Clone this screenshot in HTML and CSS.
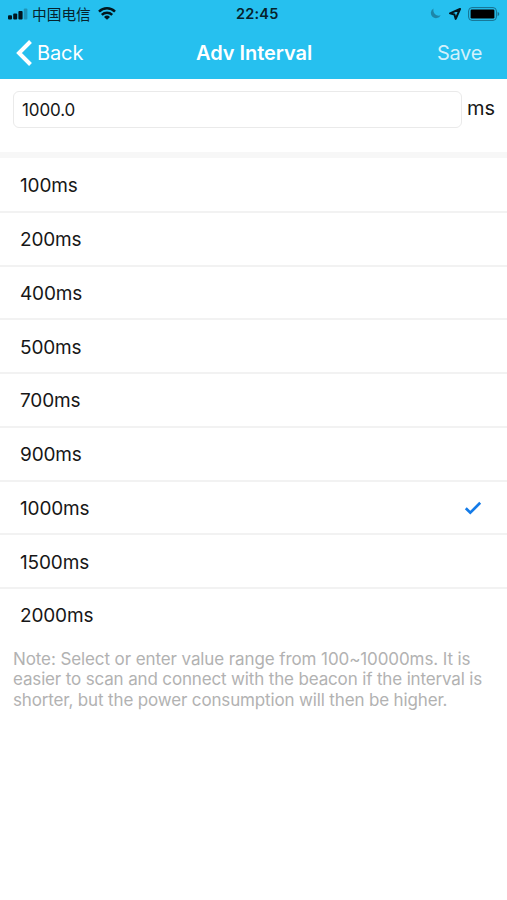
FILE: index.html
```html
<!DOCTYPE html>
<html lang="en">
<head>
<meta charset="utf-8">
<title>Adv Interval</title>
<link rel="stylesheet" href="styles.css">
</head>
<body>
<header class="top">
  <div class="status">
    <div class="side">
      <svg class="signal" width="20" height="12" viewBox="0 0 20 12"><g fill="#02161e"><rect x="0" y="7.2" width="4" height="4.4" rx="1"/><rect x="5.2" y="5.4" width="4" height="6.2" rx="1"/><rect x="10.4" y="3" width="4.2" height="8.6" rx="1"/><rect x="15.8" y=".4" width="3.6" height="11.2" rx="1" fill="#1e94b8"/></g></svg>
      <span class="carrier">中国电信</span>
      <svg class="wifi" width="18" height="13" viewBox="0 0 18 13"><g fill="none" stroke="#02161e" stroke-width="2.5"><path d="M1 4.6a11.5 11.5 0 0 1 16 0M3.8 7.8a7.5 7.5 0 0 1 10.4 0"/></g><path d="M9 12.8L6 9.9a4.4 4.4 0 0 1 6 0z" fill="#02161e"/></svg>
    </div>
    <time class="clock">22:45</time>
    <div class="side right">
      <svg class="moon" width="11" height="11" viewBox="0 0 11 11"><path d="M3.6.4A5.2 5.2 0 1 0 10.7 7.3C6.5 8.9 2.3 5 3.6.4z" fill="#1d86a9"/></svg>
      <svg class="arrow" width="12" height="12" viewBox="0 0 12 12"><path d="M11 1L1 5.4l4.4 1.1 1.3 4.4z" fill="none" stroke="#02161e" stroke-width="2" stroke-linejoin="round"/></svg>
      <svg class="battery" width="32" height="14" viewBox="0 0 32 14"><rect x=".6" y=".6" width="27.8" height="12.8" rx="3.4" fill="none" stroke="#176f8e"/><rect x="2.6" y="2.6" width="23.8" height="8.8" rx="1.2" fill="#000"/><path d="M29.6 4.8q1.7.7 1.7 2.2t-1.7 2.2z" fill="#176f8e"/></svg>
    </div>
  </div>
  <nav class="nav">
    <a class="back"><svg width="17" height="28" viewBox="0 0 17 28"><path d="M14.5 2.5L3 14l11.5 11.5" fill="none" stroke="#fff" stroke-width="4"/></svg><span>Back</span></a>
    <h1>Adv Interval</h1>
    <a class="save">Save</a>
  </nav>
</header>
<main>
  <section class="entry"><input class="field" value="1000.0" aria-label="Interval"><span class="unit">ms</span></section>
  <ul class="list">
    <li>100ms</li><li>200ms</li><li>400ms</li><li>500ms</li><li>700ms</li><li>900ms</li>
    <li>1000ms<svg width="18" height="14" viewBox="0 0 18 14"><path d="M1.8 7.2l4.5 4.5L16.2 1.8" fill="none" stroke="#147be8" stroke-width="2.7"/></svg></li>
    <li>1500ms</li><li>2000ms</li>
  </ul>
  <p class="note"><span class="loose">Note: Select or enter value range from 100~10000ms. It is</span><br><span>easier to scan and connect with the beacon if the interval is</span><br><span>shorter, but the power consumption will then be higher.</span></p>
</main>
</body>
</html>
```

FILE: styles.css
```css
* { box-sizing: border-box; }
body { margin: 0; background: #fff; color: #171717; font-family: Inter, "Noto Sans CJK SC", sans-serif; }
svg { display: block; flex: none; }
.top { height: 79px; background: #26c0ef; }
.status { height: 27px; padding: 0 7px 0 8px; display: grid; grid-template-columns: 228px auto 1fr; align-items: center; color: #06222c; }
.side { display: flex; align-items: center; }
.right { justify-content: flex-end; }
.carrier { font: 14.7px/20px "Noto Sans CJK SC", sans-serif; margin: 0 7px 0 4px; }
.clock { font-size: 14.5px; font-weight: 600; letter-spacing: .2px; }
.arrow { margin: 0 7px 0 8px; }
.nav { height: 52px; padding: 0 25px 0 16px; display: grid; grid-template-columns: 180px auto 1fr; align-items: center; color: #fff; font-size: 20px; }
.back { display: flex; align-items: center; gap: 4px; letter-spacing: -.1px; }
.nav h1 { margin: 0; font-size: 20px; font-weight: 600; letter-spacing: -.05px; }
.save { text-align: right; color: #d3f1fb; letter-spacing: -.3px; }
.entry { height: 79px; padding: 12px 12px 0 13px; display: flex; align-items: flex-start; gap: 5px; border-bottom: 6px solid #f7f7f7; }
.field { width: 449px; height: 37px; padding: 0 8px; border: 1px solid #eaeaea; border-radius: 6px; font: 17px Inter, sans-serif; letter-spacing: -.1px; color: #171717; outline: 0; }
.unit { font-size: 20px; line-height: 34px; }
.list { margin: 0; padding: 1px 0 0; list-style: none; }
.list li { height: 53.75px; padding: 2px 25px 0 20px; display: flex; align-items: center; justify-content: space-between; font-size: 19px; letter-spacing: -.15px; border-bottom: 2px solid #f2f2f2; }
.list li:last-child { border-bottom: 0; padding-top: 0; }
.note { margin: 6px 13px; font-size: 17px; line-height: 20.5px; letter-spacing: -.15px; color: #b2b2b2; white-space: nowrap; }
.note .loose { letter-spacing: -.1px; }
```
